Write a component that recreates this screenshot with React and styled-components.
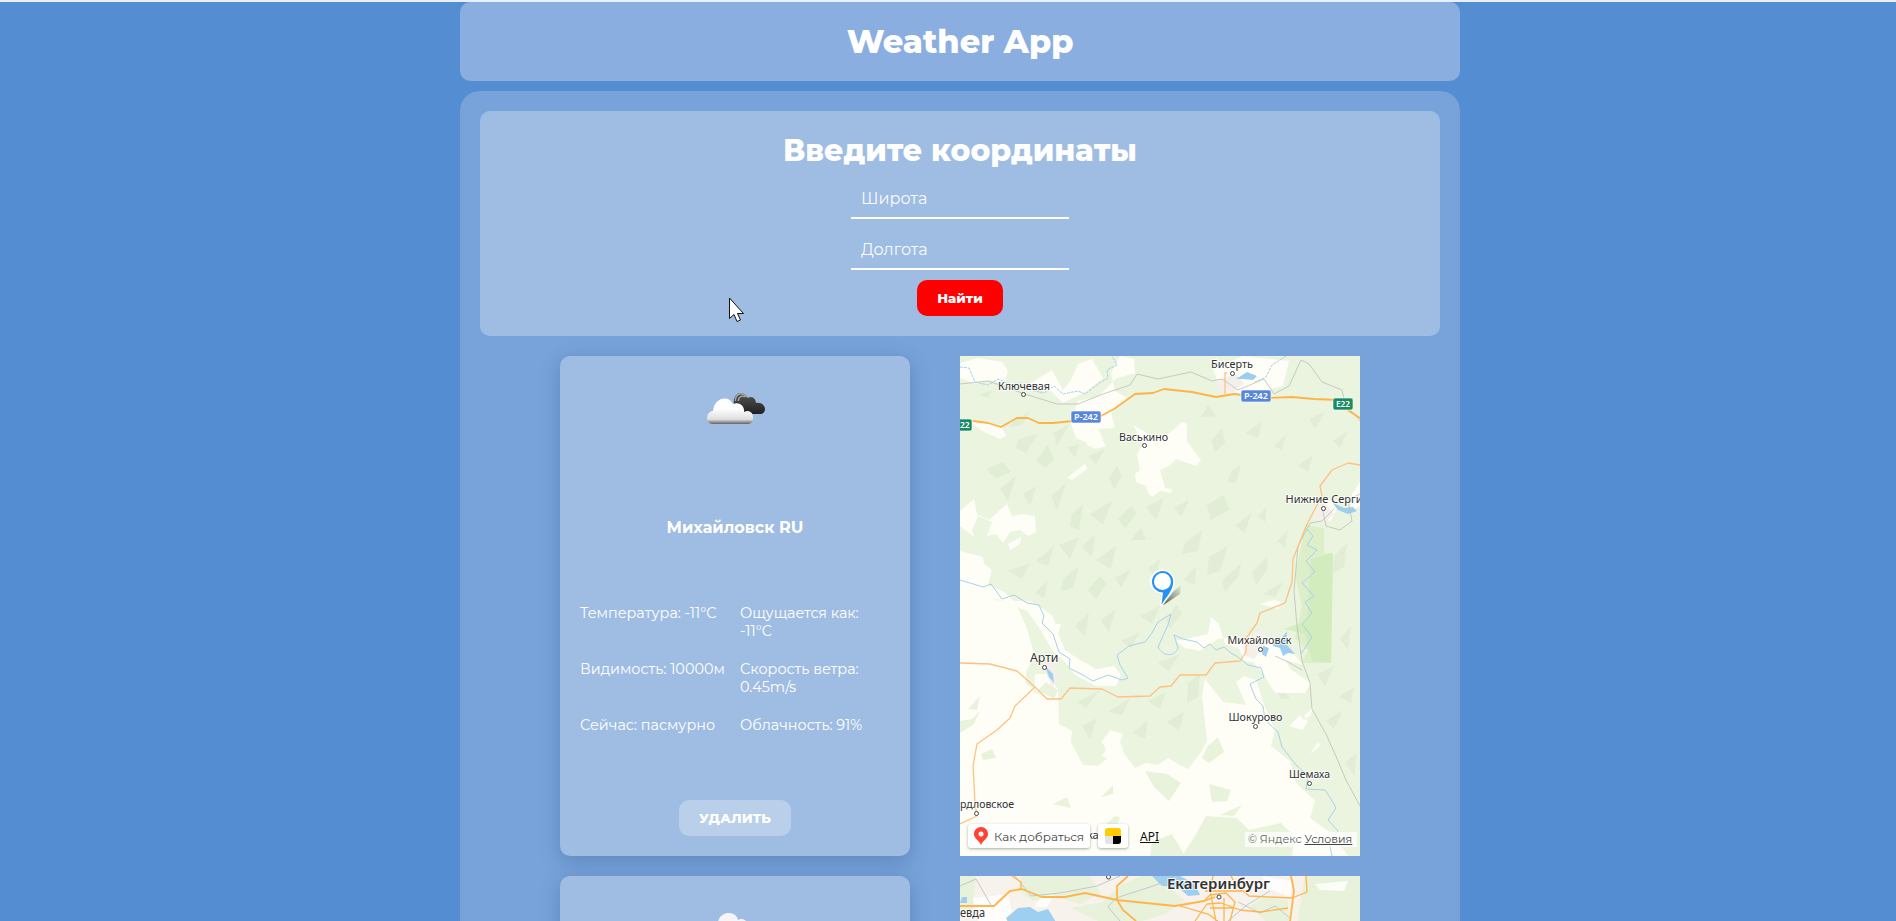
import React from 'react';
import styled, { createGlobalStyle } from 'styled-components';

const Global = createGlobalStyle`
  *{box-sizing:border-box;margin:0;padding:0}
  html,body{height:921px;overflow:hidden}
  body{background:#548dd1;font-family:Montserrat,Inter,"Noto Sans",sans-serif;color:#fff;border-top:2px solid #e9f0f8}
`;
const Viewport = styled.div`width:1920px`;
const Page = styled.div`width:1000px;height:919px;margin:0 auto;position:relative`;
const Header = styled.header`height:79px;border-radius:10px;background:#8aaee0;display:flex;align-items:center;justify-content:center;margin-bottom:10px`;
const Title = styled.h1`font-size:${p => p.$size}px;line-height:39px;font-weight:800;white-space:nowrap`;
const Main = styled.main`height:830px;border-radius:20px 20px 0 0;background:#77a3da;padding:20px;overflow:hidden`;
const Form = styled.form`height:225px;border-radius:10px;background:#9fbde3;display:flex;flex-direction:column;align-items:center;padding-top:20px;margin-bottom:20px`;
const Field = styled.input`
  width:218px;height:41px;margin-top:${p => p.$top}px;padding:1px 10px 0;border:0;border-bottom:2px solid #fff;background:transparent;outline:0;color:#fff;
  font:400 16px Montserrat,Inter,sans-serif;
  &::placeholder{color:#fff;opacity:.95}
`;
const Button = styled.button`
  width:${p => p.$w}px;height:36px;border:0;border-radius:10px;color:#fff;background:${p => p.$bg};margin-top:${p => p.$top || 0}px;
  font:800 13.33px Montserrat,Inter,sans-serif;white-space:nowrap;
`;
const Results = styled.section`display:grid;grid-template-columns:350px 400px;column-gap:50px;row-gap:20px;padding-left:80px`;
const Card = styled.article`height:500px;border-radius:10px;background:#9fbde3;box-shadow:0 5px 20px rgba(20,50,100,.25);padding:20px;display:flex;flex-direction:column;align-items:center`;
const IconBox = styled.div`width:100px;height:100px;display:flex;justify-content:center;padding:10px 0 0 2px;margin-bottom:42px;svg{flex:none;width:72px;height:44px}`;
const City = styled.h3`font-size:16px;line-height:20px;font-weight:700;margin-bottom:66px`;
const Details = styled.div`display:grid;grid-template-columns:150px 150px;column-gap:10px;row-gap:20px;width:310px;height:175px;grid-auto-rows:36px;flex:none`;
const Detail = styled.p`font-size:14.4px;line-height:18px;white-space:nowrap;span{display:block}`;
const MapFrame = styled.div`width:400px;height:500px;position:relative;overflow:hidden;background:#fefef7;> svg{display:block}`;
const MapText = styled.text`font-family:"Noto Sans",sans-serif;font-size:${p => p.$s || 11}px;font-weight:${p => p.$w || 400};fill:${p => p.$c || '#333'};stroke:${p => p.$c ? 'none' : 'rgba(255,255,255,.75)'};stroke-width:2px;paint-order:stroke`;
const Controls = styled.div`position:absolute;left:8px;bottom:8px;display:flex;align-items:center;gap:8px;color:#444`;
const Control = styled.div`height:24px;width:${p => p.$w}px;background:#fff;border-radius:3px;box-shadow:0 1px 3px #0005;display:flex;align-items:center;padding-left:${p => p.$pl}px;font-size:12px;gap:6px;white-space:nowrap;svg{flex:none}`;
const Api = styled.a`font:12px "Noto Sans",sans-serif;color:#111;text-decoration:underline;margin-left:4px`;
const Copy = styled.div`position:absolute;right:3px;bottom:9px;width:112px;height:15px;background:#fffb;color:#666;font-size:11px;line-height:15px;white-space:nowrap;padding-left:3px;u{color:#444}`;
const Cursor = styled.svg`position:absolute;left:268px;top:295px`;

const Place = ({ x, y, cx, cy, w, s, bold, children }) => (
  <g>
    <circle cx={cx} cy={cy} r="2" fill="#fff" stroke="#444" strokeWidth="1" />
    <MapText x={x} y={y} textLength={w} lengthAdjust="spacingAndGlyphs" $s={s} $w={bold}>{children}</MapText>
  </g>
);
const Badge = ({ x, y, w, c, label, tx }) => (
  <g>
    <rect x={x} y={y} width={w} height="12" rx="2" fill={c} stroke="#fff" strokeWidth=".6" />
    <MapText x={tx ?? x + 3} y={y + 9.3} $s={8.5} $w={600} $c="#fff" textLength={tx === undefined ? w - 6 : undefined} lengthAdjust="spacingAndGlyphs">{label}</MapText>
  </g>
);

const clearings = [
  'M0 7 18 2 42 6 48 15 44 28 29 24 15 28 0 22Z', 'M64 31 92 14 98 25 103 34 111 24 118 8 132 3 143 22 127 35 103 47 91 35Z',
  'M118 45 137 41 157 22 175 17 174 3 160 0 151 17 155 35 168 42 151 57 155 72 138 73 143 83 137 89 125 86 116 82 110 65Z',
  'M10 66 28 66 42 72 46 80 40 83 24 76Z', 'M253 13 283 0 329 5 323 30 289 39 261 35Z', 'M128 82 140 80 146 90 136 93 127 89Z',
  'M173 69 190 79 205 80 213 74 222 66 227 68 227 85 241 104 236 110 216 103 209 110 200 114 205 132 212 133 211 137 200 135 192 141 188 137 186 130 176 126 175 118 180 114 177 98 183 88Z',
  'M107 122 125 108 127 113 112 124Z', 'M0 155 14 143 17 158 29 164 47 148 52 160 63 158 75 160 76 176 68 180 60 174 50 176 43 187 36 178 27 180 32 166 18 160 12 174 14 181 0 170Z', 'M48 188 61 181 60 188 50 194Z',
  'M0 195 23 201 24 208 32 214 28 229 44 236 54 245 69 245 82 252 93 260 98 277 105 294 120 304 136 313 154 310 161 319 156 330 136 330 115 319 105 306 92 294 80 273 67 255 40 244 0 235Z',
  'M251 261 259 268 265 288 279 292 284 305 293 306 304 319 315 337 345 337 351 327 330 313 326 304 343 309 329 292 312 282 299 280 286 291 277 280 258 283 240 295 225 292 216 285 248 278Z',
  'M329 370 342 374 348 366 344 360 354 350 350 360 344 364 340 359Z', 'M352 375 360 390 350 398 358 386Z', 'M360 151 370 144 377 153 370 166Z',
  'M392 138 400 126V150L390 155Z', 'M300 248 314 244 321 246 318 253Z', 'M90 267 101 268 97 282 102 292 94 286Z', 'M146 380 154 374 157 384 163 392 155 398 150 404 142 400 147 392 141 386Z',
];
const scrub = [
  'M185 415 207 418 221 427 209 445 194 431Z', 'M93 448 107 441 111 452Z', 'M249 428 271 434 267 445 252 446Z', 'M247 391 258 381 264 396 249 407 242 402Z',
  'M0 365 12 363 20 355 13 369 0 377Z', 'M21 398 32 393 36 402 23 404Z', 'M246 460 277 462 289 474 321 467 334 480 332 500H222L236 478Z', 'M260 459 282 449 274 460Z', 'M141 441 153 429 153 438Z', 'M144 470 155 460 160 461 156 476Z', 'M86 326 98 334 94 343 78 334Z', 'M8 353 20 340 17 354Z', 'M192 486 212 478 225 500H190Z',
];
const darkWood = [
  'M57 63 70 55 62 69 48 71Z', 'M74 34 88 22 82 38Z', 'M20 39 32 34 28 42Z', 'M94 77 109 68 97 90Z', 'M58 84 78 77 66 97 56 92Z', 'M26 113 43 106 51 116 36 122Z', 'M76 105 88 89 94 104 85 112Z', 'M108 92 119 88 115 102Z', 'M40 133 56 120 48 145Z', 'M63 138 76 130 70 150Z', 'M91 140 106 127 97 154Z', 'M128 100 145 93 136 108Z', 'M149 122 157 110 162 120 154 133Z', 'M112 158 123 148 119 174 110 170Z', 'M130 158 152 145 143 169Z', 'M158 163 171 150 177 157 165 172Z', 'M171 184 181 171 186 184Z', 'M186 151 204 142 196 164Z', 'M99 189 119 181 110 203Z', 'M122 191 135 178 132 201Z', 'M136 204 156 190 151 213Z', 'M76 205 94 190 88 210Z', 'M48 215 70 207 62 223Z', 'M103 223 119 210 113 232 101 235Z', 'M75 237 88 224 84 242Z', 'M128 234 140 220 146 228 136 243Z', 'M155 222 171 213 161 232Z', 'M188 213 200 203 196 220Z', 'M225 187 242 174 238 195 222 198Z', 'M249 201 268 190 260 215 247 219Z', 'M224 224 236 210 235 229Z', 'M262 225 281 207 278 221 265 236Z', 'M292 216 307 201 308 212 296 229Z', 'M214 152 229 144 221 161Z', 'M247 149 264 139 269 154 251 164Z', 'M271 116 281 108 276 127 268 126Z', 'M252 84 262 72 265 87 254 96Z', 'M241 61 248 49 256 60Z', 'M286 77 302 65 298 82Z', 'M314 90 326 79 322 94Z', 'M338 110 353 99 348 116Z', 'M373 85 387 76 380 92Z', 'M349 63 365 56 355 73Z', 'M298 160 307 151 305 166Z', 'M317 185 328 174 325 192Z', 'M275 170 291 157 285 177Z', 'M303 238 323 226 315 241Z', 'M206 264 216 249 222 257 210 273Z', 'M181 260 200 250 192 268Z', 'M141 264 156 253 149 276Z', 'M115 270 129 257 125 281Z', 'M161 285 180 276 171 292Z', 'M198 307 220 298 209 315Z', 'M118 346 140 334 126 352Z', 'M148 356 170 342 162 359Z', 'M188 345 206 336 200 353Z', 'M207 366 224 356 219 375Z', 'M173 377 188 364 185 382Z', 'M122 370 137 362 130 383Z', 'M228 327 240 318 238 341 227 347Z', 'M375 199 387 187 384 211 372 218Z', 'M357 318 374 310 365 330Z', 'M380 283 391 270 388 294Z', 'M379 341 394 331 391 347Z', 'M318 330 330 342 320 343Z', 'M366 365 383 354 374 373Z', 'M385 406 396 398 395 421Z',
];

const RegionMap = () => (
  <svg width="400" height="500" viewBox="0 0 400 500">
    <rect width="400" height="500" fill="#fefef7" />
    <path d="M0 0H400V500H388L372 478 350 462 355 445 336 427 330 405 311 390 315 373 305 351 296 324 284 320 276 326 286 349 263 346 245 323 242 340 247 385 241 396 228 413 218 408 208 402 198 409 186 407 175 412 164 397 160 386 163 378 150 374 143 387 149 401 138 410 123 409 111 386 112 375 99 368 98 333 86 318 75 318 74 336 87 342 66 328 66 315 75 300 66 270 57 250 30 242 0 225Z" fill="#eaf4df" />
    <g fill="#d8e4cb" opacity=".42">{darkWood.map((d, i) => <path key={i} d={d} />)}</g>
    <path d="M346 168 364 173V197H373L371 307H341L348 295 335 282 342 250 335 218Z" fill="#dcefc9" />
    <path d="M351 203 373 197 371 307 352 305 345 278 324 273 347 265Z" fill="#cdebb8" opacity=".7" />
    {clearings.map((d, i) => <path key={i} d={d} fill="#fefef7" />)}
    {scrub.map((d, i) => <path key={i} d={d} fill="#e9f3dc" />)}
    <path d="M258 24 276 18 284 27 273 37 258 35ZM353 154 365 147 374 158 362 168ZM284 282 300 274 308 286 294 303 284 299ZM82 308 92 303 99 323 92 331Z" fill="#f5efec" />
    <g fill="none" stroke="#a9d1ed" strokeWidth="1">
      <path d="M0 11 9 12 15 26 28 29 38 23 51 29 62 27 70 34 84 37 94 30 103 38 118 35 125 38 138 28 148 22 147 14 157 9 152 0M326 0 312 9 306 21 295 26" strokeDasharray="3 1" />
      <path d="M0 224 23 231 31 228 42 243 54 239 67 247 79 249 84 260 82 267 93 278 99 296 110 303 109 312 121 318 133 325 148 319 162 324 168 322 160 309 157 299 169 290 185 286 192 277 198 266 211 258 208 269 198 291C204 302 215 300 218 292L214 279 223 283 237 286 244 292 250 288 256 294 264 291 271 297 278 301 288 309 301 312 304 321 290 328 296 343 303 350 305 364 318 376 322 391 336 409 348 420 346 433 365 434 371 443 376 452 368 464 378 475 369 486 372 500" />
      <path d="M347 173 353 180 347 189 357 194 346 205 355 216 342 227 354 240 345 246 352 257 342 268 352 281 341 298" />
    </g>
    <path d="M276 23 287 16 297 20 293 24 283 23ZM373 147 384 152 393 151 397 155 388 158 378 154ZM303 290 309 292 306 301 302 298ZM313 282 319 286 327 275 326 288 335 298 328 297 323 300 320 292 313 290ZM85 310 93 318 94 327 89 321Z" fill="#9dceee" />
    <g fill="none" stroke="#b9c0bb" strokeWidth=".8">
      <path d="M0 28 28 25 65 38 97 48 118 48 143 38 170 29 177 18 198 23 231 16 252 25 262 23 278 34 304 23 314 38 329 30 341 4 349 8 362 26 382 34 385 47 400 65M374 153 362 165 350 167 338 190 334 235 337 270 342 305 350 327 352 353 366 378 375 398 386 424 400 450M362 151 366 170 380 174 392 165 388 144 400 138" />
      <path d="M315 300 328 306 342 314" />
    </g>
    <path d="M0 307 30 308 57 315 75 331 87 343 101 343 110 332 142 333 158 341 190 340 200 331 211 330 220 319 246 319 255 307 280 305 286 296 287 281 297 267 300 257 325 247 332 226 333 203 347 168 362 140 360 130 372 114 388 107 400 109M75 331 55 350 50 362 37 374 17 388 13 410 15 446 17 460 0 468M265 38 265 17 267 17" fill="none" stroke="#ffc180" strokeWidth="1.3" strokeLinejoin="round" />
    <path d="M13 65 28 67 41 71 57 62 68 62 79 67 93 67 113 65 137 62 154 53 175 38 193 37 204 33 232 36 256 41 274 38 306 42 332 41 354 43 380 44 389 55 400 62" fill="none" stroke="#ffb347" strokeWidth="1.8" strokeLinejoin="round" />
    <Place x="38" y="34" w="52" cx="63.5" cy="38.5">Ключевая</Place>
    <Place x="251" y="11.5" w="42" cx="272.5" cy="17.5">Бисерть</Place>
    <Place x="159" y="85" w="49" cx="184.5" cy="89.5">Васькино</Place>
    <Place x="325.5" y="146.5" w="77" cx="363.5" cy="152.5">Нижние Серги</Place>
    <Place x="70" y="305.5" w="28.5" cx="84.5" cy="311.5" s={12}>Арти</Place>
    <Place x="267.5" y="288" w="64" cx="300.5" cy="293.5">Михайловск</Place>
    <Place x="268.5" y="364.5" w="54" cx="295.5" cy="370.5">Шокурово</Place>
    <Place x="329" y="422" w="41" cx="349.5" cy="427.5">Шемаха</Place>
    <Place x="0" y="451.5" w="54" cx="16.5" cy="457.5">рдловское</Place>
    <MapText x="127" y="482.5">ка</MapText>
    <Badge x={111} y={55} w={30} c="#5787db" label="Р-242" />
    <Badge x={281} y={34} w={30} c="#5787db" label="Р-242" />
    <Badge x={373} y={42} w={20} c="#198b62" label="E22" />
    <Badge x={-8} y={63} w={20} c="#198b62" label="22" tx={0} />
    <defs><linearGradient id="pinShade" x1="0" y1="1" x2="1" y2="0"><stop offset=".1" stopColor="#333" stopOpacity=".8" /><stop offset="1" stopColor="#555" stopOpacity=".05" /></linearGradient></defs>
    <path d="M202 250 213 236 221 229 220 238Z" fill="url(#pinShade)" />
    <path d="M202.500 213.500A12 12 0 0 1 214.500 226C214.500 235 206 243 202.500 250.500H200L201.500 237.500A12 12 0 0 1 202.500 213.500Z" fill="#fff" />
    <path d="M202.500 215A10.700 10.700 0 0 1 213.200 226C213 235 206 241 201.500 249L203 236.500A10.700 10.700 0 0 1 202.500 215Z" fill="#2491f5" />
    <circle cx="202.500" cy="225.500" r="8.500" fill="#fff" />
  </svg>
);

const CityMap = () => (
  <svg width="400" height="500" viewBox="0 0 400 500">
    <rect width="400" height="500" fill="#f7f3ec" />
    <path d="M0 0H16L12 35 0 37ZM62 0H130L141 18 120 28 93 20 73 25 57 14ZM180 0H195L225 25 205 38 182 45H138L111 32 142 26 160 10ZM290 30 305 20 328 25 329 45H305ZM345 0H400V50H337L341 21Z" fill="#e8f2da" />
    <path d="M13 22 48 18 54 45H18ZM83 20 94 19 87 31 74 31ZM302 0 333 5 330 21 307 12ZM355 8 388 5 384 15 360 14Z" fill="#fff" opacity=".8" />
    <path d="M192 0H220L235 8 240 19 228 20 218 11 202 10ZM46 42 58 32 70 31 78 36 88 33 96 46H48ZM2 21H7V27H0Z" fill="#9fcff0" />
    <g fill="none" stroke="#bdc3c9" strokeWidth=".9"><path d="M0 10 16 3 31 29M55 0 71 20 100 17 137 10 160 0M160 45 148 31 156 22 196 9 220 0M278 26 300 37 315 30 330 42M268 45 287 29 310 15" /></g>
    <g fill="none" stroke="#ffb44c" strokeWidth="1.8" strokeLinejoin="round">
      <path d="M0 30H34L50 15 62 13 82 21 105 21 125 17 157 24M168 0 157 10V24L163 34 176 45M157 24 215 30 244 25 255 21M331 0 334 15 330 45" />
      <path strokeWidth="1.3" d="M52 0 61 6V14M346 0 347 16 332 22 289 20 276 9 271 0M220 30 248 38 258 45M244 25 250 19 266 17 275 26 270 45M235 45 247 28 261 27 280 34 300 36 328 32M253 0 250 14 256 45M245 15H282M250 32H273M264 22V45" />
    </g>
    <circle cx="148.500" cy="1" r="2" fill="#fff" stroke="#444" />
    <Place x="207" y="13" w="103" cx="259" cy="21" s={14} bold={600}>Екатеринбург</Place>
    <MapText x="0" y="41" $s={12} textLength="25" lengthAdjust="spacingAndGlyphs">евда</MapText>
  </svg>
);

const Clouds = () => (
  <svg viewBox="0 0 72 44">
    <defs>
      <linearGradient id="light" x2="0" y2="1"><stop offset=".4" stopColor="#fff" /><stop offset=".82" stopColor="#dedede" /><stop offset="1" stopColor="#606060" /></linearGradient>
      <linearGradient id="dark" x2="0" y2="1"><stop stopColor="#555" /><stop offset="1" stopColor="#202020" /></linearGradient>
    </defs>
    <path d="M34 20C32 5 44 4 48 12 52 9 56 13 56 17 61 16 65 19 65 23 65 26 63 28 60 28H38Z" fill="url(#dark)" />
    <path d="M35.500 15C35 8 42 5 47 11M38.500 15C38 11 42 9 45 11" fill="none" stroke="#aaa" strokeWidth="1.300" />
    <path d="M13 38C5 38 5 26 13 25 14 12 28 8 33 18 40 15 45 21 44 26 50 23 54 28 53 33 52 38 49 38 46 38Z" fill="url(#light)" />
  </svg>
);
const PaleCloud = () => (
  <svg viewBox="0 0 72 44"><path d="M9 38C3 34 8 25 18 25 16 12 22 7 29 7 34 7 37 10 38 14 43 11 48 15 48 20 58 18 65 27 63 34 62 38 56 38 52 38Z" fill="#f4f5f6" /></svg>
);
const MapControls = () => (
  <>
    <Controls>
      <Control $w={122} $pl={6}>
        <svg width="14" height="18" viewBox="0 0 14 18"><path d="M7 0C3 0 0 3 0 7 0 11 4 13 6 16L7 18 8 16C10 13 14 11 14 7 14 3 11 0 7 0Z" fill="#f43" /><circle cx="7" cy="7" r="2.5" fill="#fff" /></svg>
        Как добраться
      </Control>
      <Control $w={30} $pl={7}>
        <svg width="16" height="16" viewBox="0 0 16 16"><path d="M0 8V3Q0 0 3 0H13Q16 0 16 3V8Z" fill="#fc0" /><path d="M0 8H8V16H3Q0 16 0 13Z" fill="#e3e3e7" /><path d="M8 8H16V13Q16 16 13 16H8Z" fill="#000" /></svg>
      </Control>
      <Api>API</Api>
    </Controls>
    <Copy>© Яндекс <u>Условия</u></Copy>
  </>
);

export default function App() {
  return (
    <Viewport>
      <Global />
      <Page>
        <Header><Title $size={32}>Weather App</Title></Header>
        <Main>
          <Form onSubmit={e => e.preventDefault()}>
            <Title as="h2" $size={30}>Введите координаты</Title>
            <Field $top={8} placeholder="Широта" />
            <Field $top={10} placeholder="Долгота" />
            <Button $w={86} $bg="#f00" $top={10}>Найти</Button>
          </Form>
          <Results>
            <Card>
              <IconBox><Clouds /></IconBox>
              <City>Михайловск RU</City>
              <Details>
                <Detail>Температура: -11°C</Detail>
                <Detail>Ощущается как: <span>-11°C</span></Detail>
                <Detail>Видимость: 10000м</Detail>
                <Detail>Скорость ветра: <span>0.45m/s</span></Detail>
                <Detail>Сейчас: пасмурно</Detail>
                <Detail>Облачность: 91%</Detail>
              </Details>
              <Button $w={112} $bg="#b9cfea" $top={21}>УДАЛИТЬ</Button>
            </Card>
            <MapFrame><RegionMap /><MapControls /></MapFrame>
            <Card><IconBox><PaleCloud /></IconBox></Card>
            <MapFrame><CityMap /></MapFrame>
          </Results>
        </Main>
        <Cursor width="18" height="27" viewBox="0 0 18 27"><path d="M1.500 1V21.500L6 17.500 9 24.500 12.500 23 9.500 16.500H15.500Z" fill="#fff" stroke="#111" strokeWidth="1" /></Cursor>
      </Page>
    </Viewport>
  );
}
